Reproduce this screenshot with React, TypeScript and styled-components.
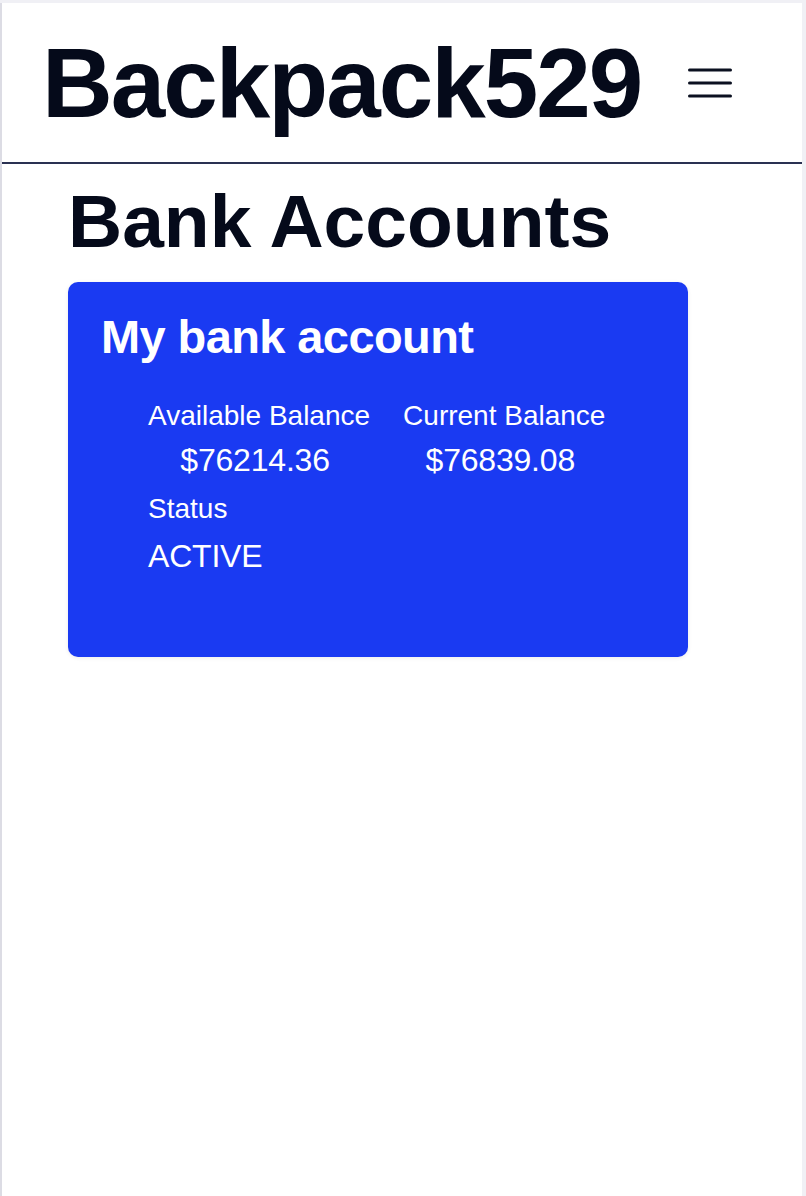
import React from "react";
import styled, { createGlobalStyle } from "styled-components";

const GlobalStyle = createGlobalStyle`
  html, body {
    margin: 0;
    padding: 0;
    background: #f0f0f5;
  }
  body {
    font-family: "Liberation Sans", Arial, Helvetica, sans-serif;
  }
`;

const Frame = styled.div`
  margin: 3px 0 0 0;
  padding-left: 2px;
  background: linear-gradient(to right, #dcdce4 0, #dcdce4 2px, transparent 2px);
  min-height: 1193px;
`;

const Page = styled.div`
  width: 800px;
  min-height: 1193px;
  background: #ffffff;
  color: #050a1a;
`;

const Header = styled.header`
  height: 159px;
  display: flex;
  align-items: center;
  padding-left: 40px;
  gap: 47px;
  border-bottom: 2px solid #2a3152;
`;

const Brand = styled.h1`
  margin: 0;
  font-size: 98px;
  line-height: 1;
  font-weight: 700;
  letter-spacing: -2px;
  color: #050a1a;
`;

const MenuButton = styled.button`
  border: none;
  background: none;
  padding: 0;
  width: 44px;
  height: 32px;
  display: flex;
  align-items: center;
  justify-content: center;
  cursor: pointer;
`;

const Main = styled.main`
  padding: 20px 0 0 66px;
`;

const PageTitle = styled.h2`
  margin: 0 0 23px 0;
  font-size: 75px;
  line-height: 1;
  font-weight: 700;
  color: #050a1a;
`;

const Card = styled.section`
  width: 620px;
  box-sizing: border-box;
  background: #1a3af2;
  border-radius: 10px;
  box-shadow: 0 1px 4px rgba(0, 0, 0, 0.08);
  padding: 31px 33px 85px 33px;
  color: #ffffff;
`;

const CardTitle = styled.h3`
  margin: 0 0 42px 0;
  font-size: 47px;
  line-height: 1;
  font-weight: 700;
  letter-spacing: -0.6px;
`;

const InfoGrid = styled.div`
  margin-left: 47px;
  display: grid;
  grid-template-columns: auto auto;
  justify-content: start;
  column-gap: 33px;
  row-gap: 19px;
`;

const Field = styled.div<{ $align: "left" | "center" }>`
  display: flex;
  flex-direction: column;
  align-items: ${(p) => (p.$align === "center" ? "center" : "flex-start")};
  text-align: ${(p) => p.$align};
`;

const Label = styled.div`
  font-size: 28px;
  line-height: 1;
  font-weight: 400;
`;

const Value = styled.div<{ $gap: number; $offset?: number }>`
  margin-top: ${(p) => p.$gap}px;
  margin-right: ${(p) => p.$offset ?? 0}px;
  font-size: 32px;
  line-height: 1;
  font-weight: 400;
  letter-spacing: -0.2px;
`;

const HamburgerIcon = () => (
  <svg width="44" height="32" viewBox="0 0 44 32" fill="none">
    <line x1="1.5" y1="3" x2="42.5" y2="3" stroke="#0b1020" strokeWidth="3" strokeLinecap="round" />
    <line x1="1.5" y1="16" x2="42.5" y2="16" stroke="#0b1020" strokeWidth="3" strokeLinecap="round" />
    <line x1="1.5" y1="29" x2="42.5" y2="29" stroke="#0b1020" strokeWidth="3" strokeLinecap="round" />
  </svg>
);

export default function App() {
  return (
    <>
      <GlobalStyle />
      <Frame>
        <Page>
          <Header>
            <Brand>Backpack529</Brand>
            <MenuButton aria-label="Menu">
              <HamburgerIcon />
            </MenuButton>
          </Header>
          <Main>
            <PageTitle>Bank Accounts</PageTitle>
            <Card>
              <CardTitle>My bank account</CardTitle>
              <InfoGrid>
                <Field $align="center">
                  <Label>Available Balance</Label>
                  <Value $gap={14} $offset={8}>$76214.36</Value>
                </Field>
                <Field $align="center">
                  <Label>Current Balance</Label>
                  <Value $gap={14} $offset={8}>$76839.08</Value>
                </Field>
                <Field $align="left">
                  <Label>Status</Label>
                  <Value $gap={17}>ACTIVE</Value>
                </Field>
              </InfoGrid>
            </Card>
          </Main>
        </Page>
      </Frame>
    </>
  );
}
